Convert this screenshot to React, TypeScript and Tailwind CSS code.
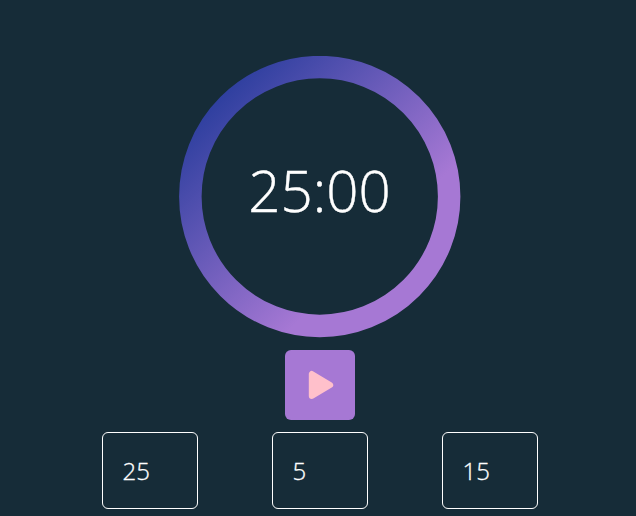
const presets = [25, 5, 15];

function TimerRing() {
  return (
    <div className="relative grid h-[282px] w-[282px] place-items-center">
      <svg className="absolute inset-0" width="282" height="282" viewBox="0 0 282 282" fill="none">
        <defs>
          <linearGradient id="ring" x1="0" y1="0" x2="1" y2="1">
            <stop offset="10%" stopColor="#2c3e9e" />
            <stop offset="70%" stopColor="#a678d4" />
          </linearGradient>
        </defs>
        <circle cx="140.75" cy="140.5" r="129.4" stroke="url(#ring)" strokeWidth="22.5" />
      </svg>
      <span className="relative -top-[6px] text-[56.5px] leading-none font-light text-white [-webkit-text-stroke:0.4px_white]">25:00</span>
    </div>
  );
}

export default function App() {
  return (
    <main className="flex h-[516px] w-full flex-col items-center overflow-hidden bg-[#162c38] pt-14 pl-[3px] font-['Open_Sans',sans-serif]">
      <TimerRing />
      <button
        aria-label="Start"
        className="mt-3 grid h-[70px] w-[70px] place-items-center rounded-[6px] bg-[#a678d4]"
      >
        <svg width="70" height="70" viewBox="0 0 70 70">
          <path
            d="M26.8 24 L26.8 46 L45.2 35 Z"
            fill="#ffc0cb"
            stroke="#ffc0cb"
            strokeWidth="6"
            strokeLinejoin="round"
          />
        </svg>
      </button>
      <div className="mt-3 flex gap-[74px]">
        {presets.map((minutes) => (
          <input
            key={minutes}
            defaultValue={minutes}
            className="h-[77px] w-24 rounded-[6px] border border-white bg-transparent pr-[18px] pl-5 text-2xl font-light text-white [-webkit-text-stroke:0.3px_white]"
          />
        ))}
      </div>
    </main>
  );
}
